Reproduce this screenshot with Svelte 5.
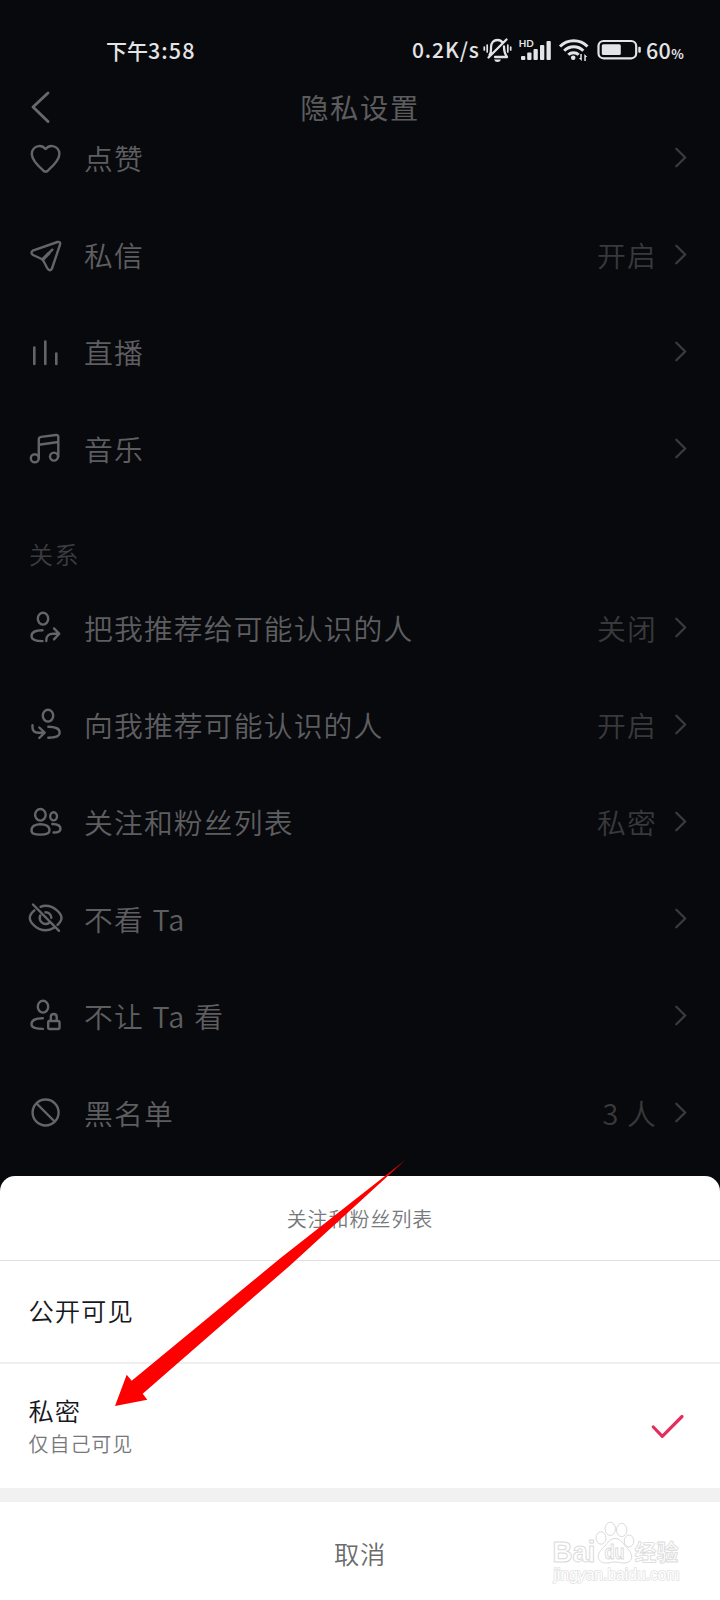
<script>
  const general = [
    { icon: 'heart', label: '点赞', value: '' },
    { icon: 'plane', label: '私信', value: '开启' },
    { icon: 'bars', label: '直播', value: '' },
    { icon: 'music', label: '音乐', value: '' }
  ];
  const relations = [
    { icon: 'suggestOut', label: '把我推荐给可能认识的人', value: '关闭' },
    { icon: 'suggestIn', label: '向我推荐可能认识的人', value: '开启' },
    { icon: 'group', label: '关注和粉丝列表', value: '私密' },
    { icon: 'eyeOff', label: '不看 Ta', value: '' },
    { icon: 'lock', label: '不让 Ta 看', value: '' },
    { icon: 'block', label: '黑名单', value: '3 人' }
  ];
</script>

{#snippet row(item)}
  <div class="row">
    <svg class="icon" viewBox="-18 -18.5 36 37">
      {#if item.icon === 'heart'}
        <path d="M-.4-8.500C-3-11.500-5.500-11.800-7.500-11.400C-11.500-10.700-14.200-7.500-14.200-3.500C-14.200 1.500-9 7.500-2.600 13.200Q-.4 15 1.800 13.200C8.200 7.500 13.400 1.500 13.400-3.500C13.400-7.500 10.700-10.700 6.700-11.400C4.700-11.800 2.200-11.500-.4-8.500Z" />
      {:else if item.icon === 'plane'}
        <path d="M-13.300-3.800L11.500-12.500Q14.800-13.300 14-9.800L6 14Q3.800 17.500 1.600 14.200L-3.300 5L-13 .5Q-16-1.800-13.300-3.800ZM-3.300 5L6.300-4.800" />
        <path d="M-3.300 5L3-1.300" stroke-width="3.200" />
      {:else if item.icon === 'bars'}
        <path stroke-width="2.6" d="M-11.700-4V12.500M-.7-10V12.500M10.300 2V12.500" />
      {:else if item.icon === 'music'}
        <circle cx="-11.200" cy="9.800" r="4" />
        <circle cx="8" cy="8.100" r="4" />
        <path d="M-7.200 9.800V-9Q-7.200-11.300-5-11.600L10-13.500Q12.300-13.700 12.300-11.500V8.100M-7.200-3.800L12.300-6.500" />
      {:else if item.icon === 'suggestOut'}
        <ellipse cx="-3" cy="-8.800" rx="5.200" ry="5.900" />
        <path d="M-3.500 2.700C-10 2.700-14.500 4.600-14.500 8.800C-14.500 12.500-9.500 13.600-3.500 13.600M.3 13.600V12.500C.3 8.500 3 6.300 7 6.300H12.800M8 .9L13.300 6.300L8 11.900" />
      {:else if item.icon === 'suggestIn'}
        <ellipse cx="2" cy="-8.800" rx="5.200" ry="5.900" />
        <path d="M2.300 2.300C9.500 2.300 13.700 4 13.700 8.300C13.700 12.300 9 13.300 2.300 13.300M-13.500.7V3C-13.500 6.500-11 8.200-7.500 8.200H-1.700M-6.700 3L-1.300 8.200L-6.700 13.500" />
      {:else if item.icon === 'group'}
        <ellipse cx="-5.600" cy="-6.700" rx="5.300" ry="5.800" />
        <path d="M-5.600 2.700C-1 2.700 3.500 4.500 3.500 8.700C3.500 12.300.5 13.100-5.600 13.100S-14.500 12.300-14.500 8.700C-14.500 4.500-10 2.700-5.600 2.700Z" />
        <ellipse cx="7.600" cy="-5.200" rx="3.400" ry="4.100" />
        <path d="M6.300 2.500C11 2.500 14.500 4 14.500 7.500C14.500 10.600 12 11 7.600 11" />
      {:else if item.icon === 'eyeOff'}
        <path d="M-13-14L13 12.300M-11.600-8.200C-14.500-5.800-16.200-3-16.200-.6C-16.200 3.500-9.500 11.800-.4 11.800C2.800 11.800 5.600 10.800 8 9.300M-5.500-11.700C-4-12.400-2.200-12.800-.4-12.800C8.700-12.800 15.500-4.600 15.500-.6C15.500 1.500 14 4 11.500 6.400M-5.800-3C-7.500 1.500-4.300 5.500-.4 5.500C1 5.500 2.200 5 3.200 4.200M-.5-6.200C2.800-6.200 5.300-3.700 5.300-.8" />
      {:else if item.icon === 'lock'}
        <ellipse cx="-3" cy="-8.800" rx="5.200" ry="5.900" />
        <path d="M-3.200 2.700C-10 2.700-14.500 4.600-14.500 8.800C-14.500 12.500-9.500 13.400-3.200 13.400M2.700 5.500H12Q13.500 5.500 13.500 7V12Q13.500 13.500 12 13.500H3.700Q2.200 13.500 2.200 12V7Q2.200 5.500 3.700 5.500M4.800 5.500V1.500C4.800-2.500 10.700-2.500 10.700 1.500V5.500" />
      {:else}
        <circle cx="-.4" cy="0" r="13" />
        <path d="M-9.400-9L8.600 9" />
      {/if}
    </svg>
    <span class="label">{item.label}</span>
    <span class="value">{item.value}</span>
    <svg class="chev" viewBox="0 0 14 21"><path d="M2.300 1.800L11.200 10.500L2.300 19.200" /></svg>
  </div>
{/snippet}

<div class="screen">
  <div class="status">
    <span class="clock">下午<span class="digits">3:58</span></span>
    <span class="rate">0.2K/s</span>
    <svg class="sys" viewBox="482 36 162 28">
      <g fill="none" stroke="#e4e4e6" stroke-width="2.300" stroke-linecap="round" stroke-linejoin="round">
        <path d="M489.500 55C491.500 52.500 491 50 491 47.500C491 42.500 494 40 497.500 40C499.500 40 501.500 41 502.500 42.500M504 46.500C504 50.500 504.500 53.500 507 57H495M488.500 57.500L506.500 39.500" />
        <path stroke-width="1.700" d="M487.200 45V52M484.300 47V50M507.800 45V52M510.700 47V50" />
      </g>
      <g fill="#e4e4e6">
        <path d="M494 59.500H501Q500 62 497.500 62T494 59.500Z" />
        <rect x="521" y="56" width="4.300" height="4" rx="1" />
        <rect x="527.200" y="52.500" width="4.300" height="7.500" rx="1" />
        <rect x="533.500" y="49" width="4.300" height="11" rx="1" />
        <rect x="540" y="45" width="4.300" height="15" rx="1" />
        <rect x="546.500" y="41" width="4.300" height="19" rx="1" />
        <text x="518.800" y="47" font-size="10" font-weight="700" textLength="15" lengthAdjust="spacingAndGlyphs">HD</text>
        <circle cx="573.200" cy="57.800" r="2.300" />
        <rect x="601.800" y="44.300" width="19" height="10.700" rx="1.500" />
        <rect x="638.300" y="46.800" width="2.500" height="6" rx="1" />
        <path d="M581.800 54V61L578.800 58H580.300V54ZM584.300 61V54L587.300 57H585.800V61Z" />
      </g>
      <g fill="none" stroke="#e4e4e6" stroke-width="3">
        <path d="M560 46.500C567.500 38.700 580 38.700 587.500 46.500M564.200 50.700C569.500 45.400 578 45.400 583.300 50.700M568.300 54.700C571 52 576 52 578.700 54.700" />
        <rect x="598.500" y="41" width="37.700" height="17.300" rx="5" stroke-width="2.200" />
      </g>
    </svg>
    <span class="pct">60<small>%</small></span>
  </div>

  <header>
    <svg class="back" viewBox="28 88 28 38"><path d="M48 93L33 107L48 121.500" /></svg>
    <h1>隐私设置</h1>
  </header>

  <main>
    {#each general as item}{@render row(item)}{/each}
    <h2>关系</h2>
    {#each relations as item}{@render row(item)}{/each}
  </main>

  <section class="sheet">
    <div class="sheet-title">关注和粉丝列表</div>
    <div class="option first"><div class="name">公开可见</div></div>
    <div class="option second">
      <div>
        <div class="name">私密</div>
        <div class="hint">仅自己可见</div>
      </div>
      <svg class="check" viewBox="650 1412 36 28"><path d="M653.300 1427L662.300 1436.300L682 1416.500" /></svg>
    </div>
    <div class="band"></div>
    <div class="cancel">取消</div>
  </section>

  <svg class="arrow" viewBox="110 1155 300 256">
    <path fill="#fe0000" d="M115 1406L126.700 1374.700L131.700 1380.700L280 1258.500L405.300 1160L290 1265.500L142.700 1393.700L147.300 1399.700Z" />
  </svg>

  <svg class="mark" viewBox="548 1518 136 70">
    <g fill="#fff" stroke="#dadada" stroke-width="1">
      <ellipse cx="601" cy="1538" rx="5" ry="6.200" />
      <ellipse cx="610.300" cy="1528.800" rx="5.200" ry="6.600" />
      <ellipse cx="621.700" cy="1530" rx="5.200" ry="6.600" />
      <ellipse cx="629" cy="1541" rx="4.800" ry="6" />
      <path d="M615 1538.500C609 1538.500 606.500 1545 602 1549C595 1556 598.500 1563 606 1563C611 1563 611 1562 615 1562S620 1563 624 1563C632 1563 634.500 1556 628 1549C623.500 1544.500 621 1538.500 615 1538.500Z" />
      <g stroke-linejoin="round">
        <text x="552.500" y="1562" font-size="29" font-weight="700" textLength="43" lengthAdjust="spacingAndGlyphs">Bai</text>
        <text x="604.500" y="1559" font-size="20" font-weight="700" textLength="20" lengthAdjust="spacingAndGlyphs">du</text>
        <text class="cn" x="634.500" y="1560" font-size="22" font-weight="700" stroke-width=".8" textLength="44">经验</text>
        <text x="553.500" y="1579.500" font-size="16" stroke="#e2e2e2" paint-order="stroke" stroke-width="1.600" textLength="126" lengthAdjust="spacingAndGlyphs">jingyan.baidu.com</text>
      </g>
    </g>
  </svg>
</div>

<style>
  :global(body) { margin: 0; background: #08090c; }
  .screen {
    position: relative;
    width: 720px;
    height: 1600px;
    overflow: hidden;
    display: flex;
    flex-direction: column;
    background: #08090c;
    color: #5e5e61;
    font-family: "Noto Sans CJK SC", "Noto Sans", sans-serif;
    font-weight: 350;
  }
  .status {
    height: 80px;
    flex: none;
    display: flex;
    align-items: center;
    padding: 20px 0 0 106px;
    box-sizing: border-box;
    color: #e4e4e6;
    font-size: 21px;
    font-weight: 500;
    white-space: nowrap;
  }
  .clock { width: 306px; margin-top: -2px; }
  .digits { font-size: 21.500px; letter-spacing: 1.100px; }
  .rate { width: 70px; font-family: "Noto Sans CJK SC", sans-serif; font-size: 21px; letter-spacing: .9px; font-weight: 500; margin-top: -2px; }
  .sys { width: 162px; height: 28px; flex: none; font-family: Lato, sans-serif; }
  .pct { margin: -2px 0 0 2px; font-size: 21.500px; letter-spacing: .3px; }
  .pct small { font-size: 13px; font-weight: 700; }
  header {
    height: 56px;
    flex: none;
    display: grid;
    grid-template-columns: 28px 28px 1fr 56px;
    align-items: center;
  }
  .back { grid-column: 2; width: 28px; height: 38px; margin-top: -2px; }
  .back path, .icon, .chev path, .check path {
    fill: none;
    stroke-linecap: round;
    stroke-linejoin: round;
  }
  .back path { stroke: #68696c; stroke-width: 2.900; }
  h1 {
    margin: 0;
    text-align: center;
    font-size: 28.300px;
    line-height: 54px;
    height: 56px;
    letter-spacing: 1.600px;
    font-weight: 400;
    color: #5c5c5f;
  }
  main { height: 1040px; flex: none; overflow: hidden; }
  .row { height: 97px; display: flex; align-items: center; padding-left: 28px; }
  .row:first-child { margin-top: -27px; }
  .icon { width: 36px; height: 37px; stroke: #646568; stroke-width: 2.400; }
  .label, .value { font-size: 28.800px; letter-spacing: 1.150px; line-height: 44px; white-space: pre; }
  .label { margin-left: 20px; flex: 1; word-spacing: 1px; }
  .value { color: #38393c; }
  .chev { width: 14px; height: 21px; margin: 0 32px 0 17px; }
  .chev path { stroke: #3a3b3e; stroke-width: 2.300; }
  h2 {
    margin: 0;
    height: 82px;
    padding: 37px 0 0 29px;
    box-sizing: border-box;
    font-size: 24px;
    line-height: 40px;
    letter-spacing: 1.500px;
    font-weight: 350;
    color: #3c3d40;
  }
  .sheet {
    height: 424px;
    flex: none;
    background: #fff;
    border-radius: 15px 15px 0 0;
    color: #77787b;
  }
  .sheet-title {
    height: 85px;
    box-sizing: border-box;
    border-bottom: 1px solid #dfdfe0;
    text-align: center;
    font-size: 20px;
    line-height: 85px;
    letter-spacing: .95px;
  }
  .option { display: flex; align-items: center; padding: 0 34px 0 28.500px; box-sizing: border-box; }
  .first { height: 103px; padding-bottom: 4px; border-bottom: 2px solid #efeff0; }
  .second { height: 124px; justify-content: space-between; }
  .name { color: #17181d; font-size: 25.300px; line-height: 36px; letter-spacing: 1px; }
  .hint { font-size: 20px; line-height: 32px; letter-spacing: .95px; }
  .check { width: 36px; height: 28px; }
  .check path { stroke: #e62e5e; stroke-width: 3.200; }
  .band { height: 14px; background: #f1f1f1; }
  .cancel { text-align: center; font-size: 25.300px; line-height: 103px; height: 98px; letter-spacing: .8px; color: #6b6b6d; }
  .arrow { position: absolute; left: 110px; top: 1155px; width: 300px; height: 256px; }
  .mark { position: absolute; left: 548px; top: 1518px; width: 136px; height: 70px; font-family: "Liberation Sans", sans-serif; }
  .cn { font-family: "Noto Sans CJK SC", sans-serif; }
</style>
